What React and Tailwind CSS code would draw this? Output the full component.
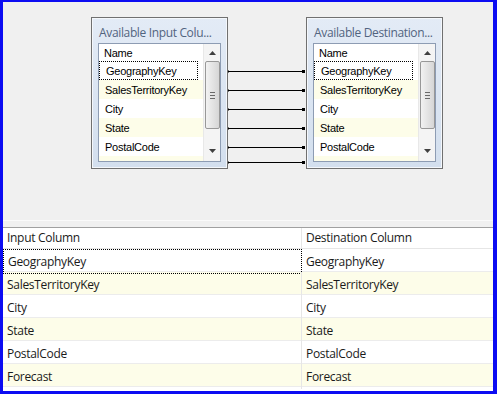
import React from "react";

const rows = ["GeographyKey", "SalesTerritoryKey", "City", "State", "PostalCode", "Forecast"];
const listRows = ["GeographyKey", "SalesTerritoryKey", "City", "State", "PostalCode"];

function UpArrow() {
  return (
    <svg width="7" height="4" viewBox="0 0 7 4"><path d="M0 4 L3.5 0 L7 4 Z" fill="#404040" /></svg>
  );
}
function DownArrow() {
  return (
    <svg width="7" height="4" viewBox="0 0 7 4"><path d="M0 0 L3.5 4 L7 0 Z" fill="#404040" /></svg>
  );
}

function Node({ pos, title }) {
  return (
    <div className={`absolute ${pos} top-[15px] w-[137px] h-[152px] border border-[#707070] bg-gradient-to-b from-[#e3ebf6] to-[#d3dfee] shadow-[inset_0_0_0_1px_#f4f7fb]`}>
      <div className="h-[25px] pl-[7px] pt-[7px] text-[12px] leading-[16px] text-[#52647f] whitespace-nowrap overflow-hidden" style={{ fontFamily: '"Open Sans", sans-serif', letterSpacing: "-0.35px" }}>
        {title}
      </div>
      <div className="mx-[6px] h-[119px] border border-[#8d9cb3] bg-white flex overflow-hidden">
        <div className="flex-1 flex flex-col text-[11px] text-black" style={{ fontFamily: '"Liberation Sans", Arial, sans-serif', letterSpacing: "-0.25px" }}>
          <div className="h-[17px] shrink-0 pl-[5px] leading-[18px]">Name</div>
          {listRows.map((r, i) => (
            <div key={r} className={`h-[19px] shrink-0 leading-[20px] pl-[6px] ${i % 2 === 1 ? "bg-[#fdfde9]" : "bg-white"}`}>
              {i === 0 ? (
                <div className="h-[19px] mr-[5px] -ml-[6px] pl-[6px] border border-dotted border-black leading-[18px]">{r}</div>
              ) : (
                r
              )}
            </div>
          ))}
          <div className="flex-1 bg-[#fdfde9]" />
        </div>
        <div className="w-[17px] shrink-0 bg-[#f4f4f4] border-l border-[#e8e8e8] flex flex-col items-center">
          <div className="h-[17px] flex items-center justify-center"><UpArrow /></div>
          <div className="w-[15px] h-[68px] rounded-[2px] border border-[#989898] bg-gradient-to-r from-[#f2f2f2] to-[#d6d6d6] flex flex-col items-center justify-center gap-[2px]">
            <div className="w-[5px] h-px bg-[#6a6a6a]" />
            <div className="w-[5px] h-px bg-[#6a6a6a]" />
            <div className="w-[5px] h-px bg-[#6a6a6a]" />
          </div>
          <div className="flex-1" />
          <div className="h-[17px] flex items-start pt-[5px] justify-center"><DownArrow /></div>
        </div>
      </div>
    </div>
  );
}

export default function App() {
  const ys = [69, 88, 107, 126, 145, 160];
  return (
    <div className="w-[497px] h-[394px] border-l-[3px] border-t-[2px] border-r-[4px] border-b-[3px] border-[#0c0cf2] bg-white flex flex-col overflow-hidden">
      <div className="relative h-[218px] shrink-0 bg-[#f0f0f0]">
        <svg className="absolute left-0 top-0" width="490" height="218">
          {ys.map((y) => (
            <g key={y}>
              <line x1="225" y1={y + 0.5} x2="302" y2={y + 0.5} stroke="#000" strokeWidth="1" />
              <rect x="224" y={y - 0.5} width="2" height="2" fill="#000" />
              <rect x="299" y={y - 1} width="3" height="3" fill="#000" />
            </g>
          ))}
        </svg>
        <Node pos="left-[88px]" title="Available Input Colu..." />
        <Node pos="left-[303px]" title="Available Destination..." />
      </div>
      <div className="h-[7px] shrink-0 bg-[#f0f0f0] border-t border-[#fafafa]" />
      <div className="flex-1 border-t border-[#a0a0a0] bg-white text-[12px] text-[#1a1a1a]" style={{ fontFamily: '"Open Sans", sans-serif', letterSpacing: "-0.3px" }}>
        <div className="grid grid-cols-[299px_1fr] h-[21px] border-b border-[#e6e6e6] leading-[20px]">
          <div className="pl-[4px] border-r border-[#e6e6e6]">Input Column</div>
          <div className="pl-[4px]">Destination Column</div>
        </div>
        {rows.map((r, i) => (
          <div key={r} className={`grid grid-cols-[299px_1fr] h-[23px] leading-[25px] border-b border-[#ececec] ${i % 2 === 1 ? "bg-[#fdfde9]" : "bg-white"}`}>
            <div className={`pl-[4px] border-r border-[#e6e6e6] ${i === 0 ? "border border-dotted border-black leading-[23px]" : ""}`}>{r}</div>
            <div className="pl-[4px]">{r}</div>
          </div>
        ))}
      </div>
    </div>
  );
}
